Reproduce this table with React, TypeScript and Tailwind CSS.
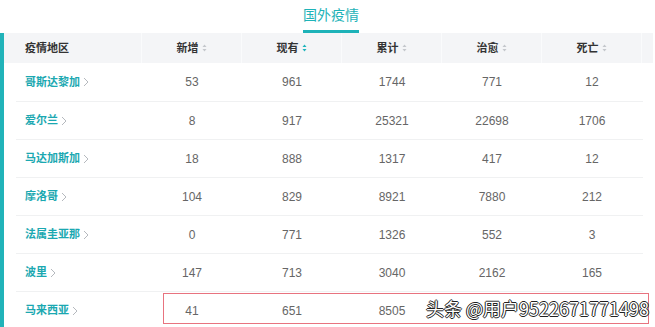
import React from 'react';

const rows = [
  { name: '哥斯达黎加', add: 53, now: 961, total: 1744, cured: 771, dead: 12 },
  { name: '爱尔兰', add: 8, now: 917, total: 25321, cured: 22698, dead: 1706 },
  { name: '马达加斯加', add: 18, now: 888, total: 1317, cured: 417, dead: 12 },
  { name: '摩洛哥', add: 104, now: 829, total: 8921, cured: 7880, dead: 212 },
  { name: '法属圭亚那', add: 0, now: 771, total: 1326, cured: 552, dead: 3 },
  { name: '波里', add: 147, now: 713, total: 3040, cured: 2162, dead: 165 },
  { name: '马来西亚', add: 41, now: 651, total: 8505, cured: 0, dead: 0 },
];

const headers = ['新增', '现有', '累计', '治愈', '死亡'];

function SortIcon({ active }: { active?: boolean }) {
  const color = active ? '#1bb3bb' : '#c4c7cc';
  return (
    <svg width="5" height="8" viewBox="0 0 5 8" className="ml-[3px]">
      <path d="M2.5 0.5 L4.5 3 L0.5 3 Z" fill={color} />
      <path d="M2.5 7.5 L4.5 5 L0.5 5 Z" fill={color} />
    </svg>
  );
}

function Chevron() {
  return (
    <svg width="6" height="10" viewBox="0 0 6 10" className="ml-[3px]">
      <path d="M1 1 L5 5 L1 9" fill="none" stroke="#b5b9be" strokeWidth="1" />
    </svg>
  );
}

export default function App() {
  return (
    <div
      className="relative w-[655px] h-[327px] overflow-hidden bg-white"
      style={{ fontFamily: '"Liberation Sans", Arial, "Noto Sans CJK SC", sans-serif' }}
    >
      <div className="h-[33px] flex justify-center">
        <div className="flex flex-col items-center w-[56px] ml-[7px]">
          <div className="h-[30px] flex items-center text-[14px] text-[#1eb3b8]">国外疫情</div>
          <div className="h-[3px] w-full bg-[#1db2b8]" />
        </div>
      </div>

      <div className="flex">
        <div className="w-[4px] h-[300px] bg-[#21b3b9]" />
        <div className="flex-1">
          <div className="h-[30px] w-[649px] bg-[#f4f5f7] pl-[12px] flex">
            <div className="w-[126px] pl-[9px] flex items-center text-[11px] font-bold text-[#333] border-r border-[#fafbfc]">
              疫情地区
            </div>
            {headers.map((h, i) => (
              <div
                key={h}
                className="w-[100px] flex items-center justify-center text-[11px] font-bold text-[#333] border-r border-[#fafbfc]"
              >
                {h}
                <SortIcon active={i === 1} />
              </div>
            ))}
          </div>

          <div className="ml-[12px] w-[627px]">
            {rows.map((r, idx) => (
              <div
                key={r.name}
                className={`flex border-b border-[#f0f1f2] ${idx === 0 ? 'h-[39px]' : 'h-[38px]'}`}
              >
                <div className="w-[126px] pl-[9px] flex items-center text-[11px] font-bold text-[#1ba8b1]">
                  {r.name}
                  <Chevron />
                </div>
                {[r.add, r.now, r.total, r.cured, r.dead].map((v, i) => (
                  <div key={i} className="w-[100px] flex items-center justify-center text-[12px] text-[#666]">
                    {idx === 6 && i > 2 ? '' : v}
                  </div>
                ))}
              </div>
            ))}
          </div>
        </div>
      </div>

      <div className="absolute left-[163px] top-[293px] w-[486px] h-[31px] border border-[#e8737f]" />
      <div
        className="absolute left-[426px] top-[296px] text-[18px] leading-[24px] text-white whitespace-nowrap [text-shadow:-1px_0_#222,1px_0_#222,0_-1px_#222,0_1px_#222]"
        style={{ fontFamily: '"Noto Sans CJK SC", "Liberation Sans", sans-serif' }}
      >
        头条 @用户9522671771498
      </div>
    </div>
  );
}
